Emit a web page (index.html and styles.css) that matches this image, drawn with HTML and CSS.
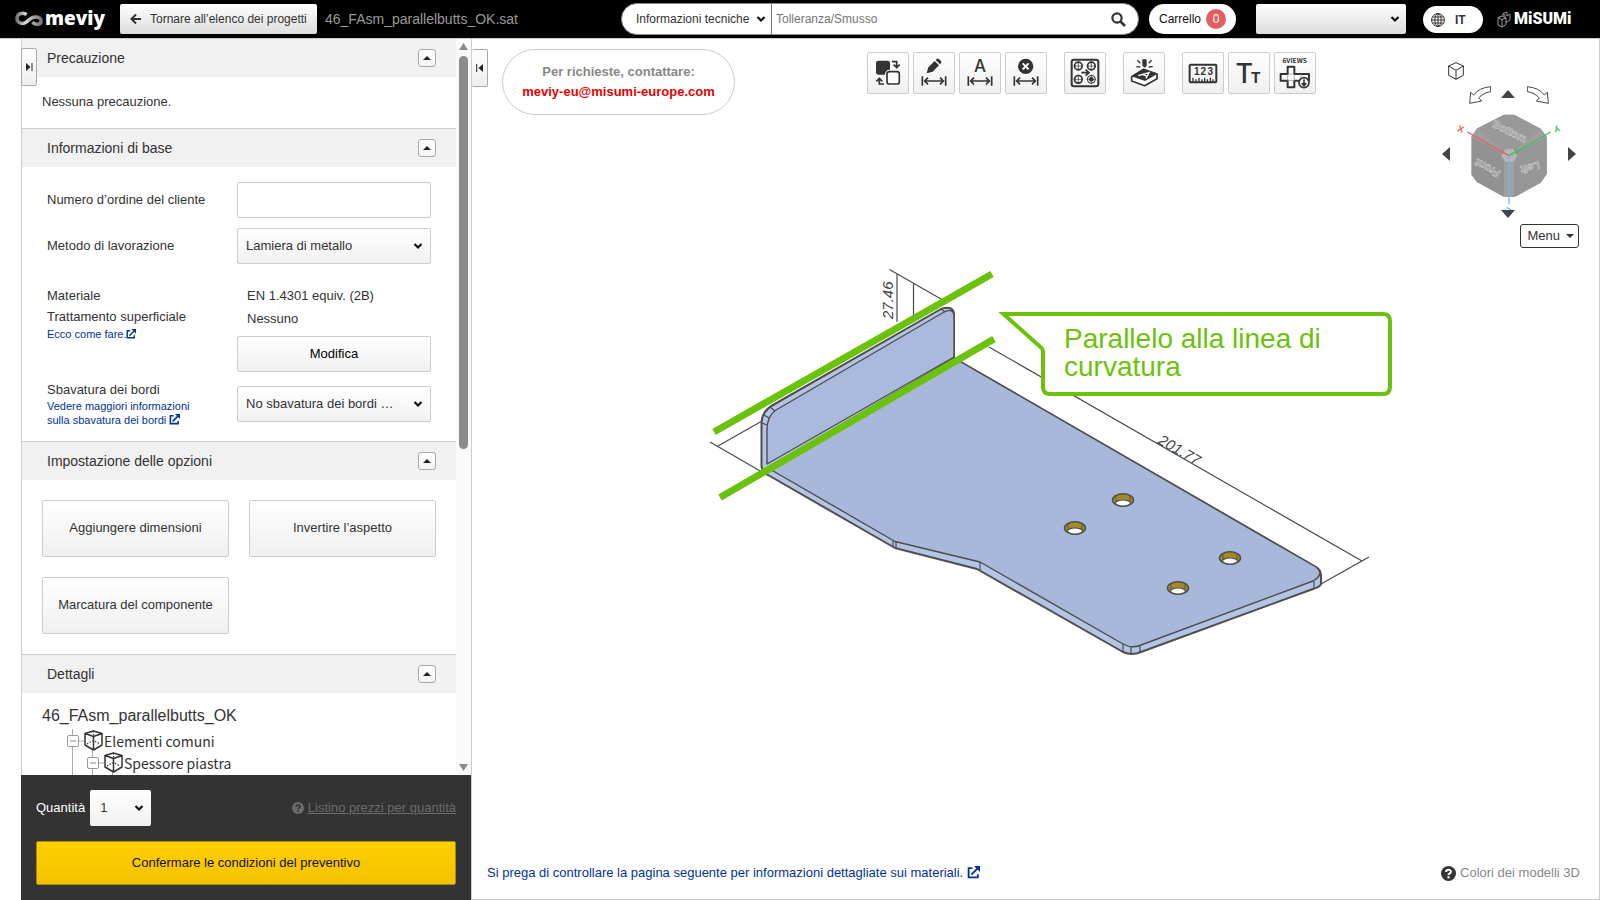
FILE: index.html
```html
<!DOCTYPE html>
<html lang="it">
<head>
<meta charset="utf-8">
<meta name="viewport" content="width=device-width, initial-scale=1">
<title>meviy</title>
<link rel="stylesheet" href="styles.css">
</head>
<body>
<svg class="defs" aria-hidden="true">
  <symbol id="chevron" viewBox="0 0 10 8"><path d="M1.5 2 5 5.5 8.500 2" fill="none" stroke="currentColor" stroke-width="2.200"/></symbol>
  <symbol id="external" viewBox="0 0 12 12"><path d="M5 2H1.500v8.500H10V7.500M4 8 10 2" fill="none" stroke="currentColor" stroke-width="1.700"/><path d="M6.500 0H12v5.500z" fill="currentColor"/></symbol>
  <symbol id="help" viewBox="0 0 14 14"><circle cx="7" cy="7" r="7" fill="currentColor"/><path d="M4.800 5.500C4.800 2.900 9.300 2.900 9.300 5.400 9.300 6.900 7 6.900 7 8.500" fill="none" stroke="var(--mark)" stroke-width="1.900"/><rect x="6" y="9.500" width="2" height="2" fill="var(--mark)"/></symbol>
  <symbol id="node" viewBox="0 0 19 21"><path d="M9.500 1 18 3.500v11.500L9.500 20 1 15V3.500zM1 3.500 9.500 6.500 18 3.500M9.500 6.500V20" fill="none" stroke="#333" stroke-width="1.500" stroke-linejoin="round"/><path d="M9.500 1v10M3 14l6.500-3.500L16 14" fill="none" stroke="#333" stroke-width="1.200" stroke-dasharray="1.500 1.500"/></symbol>
  <symbol id="span" viewBox="0 0 126 126"><path d="M28 73v28M98 73v28M36 87h54M45 77 35 87l10 10M81 77l10 10-10 10" fill="none" stroke="#333" stroke-width="5"/></symbol>
</svg>

<header class="topbar">
  <a class="logo" href="#" aria-label="meviy">
    <svg width="28" height="16" viewBox="0 0 29 16"><defs><linearGradient id="silver"><stop offset="0" stop-color="#77727a"/><stop offset=".35" stop-color="#ddd8dc"/><stop offset=".65" stop-color="#aaa"/><stop offset="1" stop-color="#777"/></linearGradient></defs><path d="M12 3.500C8 .5 2 2.500 2 7.500 2 12.500 8 14 12 11 15 8.500 17 6 21 6c3 0 6 1 6 4 0 4-5 4.500-9 1.500" fill="none" stroke="url(#silver)" stroke-width="3.600"/></svg>
    <span class="logo-name">meviy</span>
  </a>
  <button class="back" type="button"><svg width="11" height="12" viewBox="0 0 11 12"><path d="M11 6H2M6 1.500 1.500 6 6 10.500" fill="none" stroke="#333" stroke-width="2"/></svg>Tornare all’elenco dei progetti</button>
  <span class="filename">46_FAsm_parallelbutts_OK.sat</span>
  <form class="search">
    <span class="pick search-kind"><select aria-label="Categoria"><option>Informazioni tecniche</option></select><svg class="chev" width="10" height="8"><use href="#chevron"/></svg></span>
    <input type="text" placeholder="Tolleranza/Smusso" aria-label="Cerca">
    <button class="search-go" type="button" aria-label="Cerca"><svg width="15" height="15" viewBox="0 0 15 15"><circle cx="6" cy="6" r="4.600" fill="none" stroke="#333" stroke-width="2.200"/><path d="m9 9 5 5" stroke="#333" stroke-width="2.600"/></svg></button>
  </form>
  <button class="cart" type="button">Carrello <span class="badge">0</span></button>
  <span class="pick account"><select aria-label="Account"><option></option></select><svg class="chev" width="10" height="8"><use href="#chevron"/></svg></span>
  <button class="lang" type="button"><svg width="14" height="14" viewBox="0 0 14 14"><g fill="none" stroke="#333"><circle cx="7" cy="7" r="6.400"/><ellipse cx="7" cy="7" rx="3.200" ry="6.400"/><path d="M7 .5v13M.5 7h13M1.500 4h11M1.500 10h11"/></g></svg>IT</button>
  <a class="misumi" href="#" aria-label="MiSUMi"><svg width="15" height="17" viewBox="0 0 15 17"><path d="M1 6.500 5 5l4 2v6.500L5 16l-4-2zM1 6.500l4 2 4-1.500M5 8.500V16M6 5V2.500L10 1v4l3-2v6l-4 2.500M6 2.500 8 4v2" fill="none" stroke="#aaa" stroke-width=".9"/></svg><span>MiSUMi</span></a>
</header>

<main class="workspace">
  <aside class="sidebar">
    <button class="tab tab-inner" type="button" aria-label="Espandi"><svg width="7" height="8" viewBox="0 0 7 8"><path d="M0 0l4.500 4L0 8z" fill="#222"/><path d="M6 0v8" stroke="#222"/></svg></button>
    <div class="scroller">
      <div class="sections">
        <section>
          <div class="head"><h2>Precauzione</h2><button class="fold" type="button" aria-label="Comprimi"></button></div>
          <p class="notice">Nessuna precauzione.</p>
        </section>
        <section>
          <div class="head"><h2>Informazioni di base</h2><button class="fold" type="button" aria-label="Comprimi"></button></div>
          <div class="form">
            <div class="row"><label for="order">Numero d’ordine del cliente</label><input id="order" class="field" type="text"></div>
            <div class="row"><label for="method">Metodo di lavorazione</label><span class="pick field"><select id="method"><option>Lamiera di metallo</option></select><svg class="chev" width="10" height="8"><use href="#chevron"/></svg></span></div>
            <div class="row material">
              <div><p>Materiale</p><p>Trattamento superficiale</p><a href="#">Ecco come fare.<svg width="10" height="10"><use href="#external"/></svg></a></div>
              <div class="values"><p>EN 1.4301 equiv. (2B)</p><p>Nessuno</p><button class="field modify" type="button">Modifica</button></div>
            </div>
            <div class="row deburr">
              <div><label for="edge">Sbavatura dei bordi</label><a href="#">Vedere maggiori informazioni<br>sulla sbavatura dei bordi <svg width="11" height="11"><use href="#external"/></svg></a></div>
              <span class="pick field"><select id="edge"><option>No sbavatura dei bordi …</option></select><svg class="chev" width="10" height="8"><use href="#chevron"/></svg></span>
            </div>
          </div>
        </section>
        <section>
          <div class="head"><h2>Impostazione delle opzioni</h2><button class="fold" type="button" aria-label="Comprimi"></button></div>
          <div class="options">
            <button type="button">Aggiungere dimensioni</button>
            <button type="button">Invertire l’aspetto</button>
            <button type="button">Marcatura del componente</button>
          </div>
        </section>
        <section>
          <div class="head"><h2>Dettagli</h2><button class="fold" type="button" aria-label="Comprimi"></button></div>
          <div class="details">
            <h3>46_FAsm_parallelbutts_OK</h3>
            <ul class="tree">
              <li><svg width="37" height="22" viewBox="0 0 37 22"><path d="M5.500-1v6M5.500 17v8M11 11h6M25.500 20v2" stroke="#aaa" fill="none"/><rect x=".5" y="5.500" width="11" height="11" rx="1.500" fill="#fff" stroke="#999"/><path d="M3 11h6" stroke="#888"/><use href="#node" x="17" width="19" height="21"/></svg>Elementi comuni</li>
              <li><svg width="57" height="22" viewBox="0 0 57 22"><path d="M5.500 0v24M25.500-2v7M25.500 17v8M31 11h6M45.500 20v4" stroke="#aaa" fill="none"/><rect x="20.500" y="5.500" width="11" height="11" rx="1.500" fill="#fff" stroke="#999"/><path d="M23 11h6" stroke="#888"/><use href="#node" x="37" width="19" height="21"/></svg>Spessore piastra</li>
            </ul>
          </div>
        </section>
      </div>
      <div class="scrollbar" aria-hidden="true"><svg width="9" height="7"><path d="M4.500 0 9 7H0z" fill="#8b8b8b"/></svg><div class="track"><div class="thumb"></div></div><svg width="9" height="7"><path d="M0 0h9L4.500 7z" fill="#8b8b8b"/></svg></div>
    </div>
    <footer class="quote">
      <div class="quantity">
        <label for="qty">Quantità</label>
        <span class="pick qty"><select id="qty"><option>1</option></select><svg class="chev" width="10" height="8"><use href="#chevron"/></svg></span>
        <a class="prices" href="#"><svg width="12" height="12"><use href="#help"/></svg><span>Listino prezzi per quantità</span></a>
      </div>
      <button class="confirm" type="button">Confermare le condizioni del preventivo</button>
    </footer>
  </aside>

  <section class="viewer">
    <svg class="model" viewBox="472 39 1127 860">
      <g fill="none" stroke="#4a4a4a" stroke-width="1.200">
        <path d="M889.500 269.500 948 303M897 274v48M913.500 284v31M710 442l52 30M718 446l44-25M989 347l373 214M1321 584l48-27"/>
      </g>
      <g stroke="#4e4e4e" stroke-width="2" stroke-linejoin="round">
        <path fill="#b3c4e4" d="M761.500 465V423Q762 411 773 405L941 309Q954 305 954 315V358L1316 567Q1321 570 1321 575V584Q1320 587 1313 589L1141 652Q1132 656 1123 652L977 569 895 548 768 475Q761.500 472 761.500 465Z"/>
        <path fill="#a7b8da" stroke-width="1.400" d="M768 468 954 358 1316 567Q1325 574 1313 581L1141 645Q1132 649 1123 644L980 562 895 541.500Z"/>
        <path fill="#a9badd" stroke-width="1.400" d="M767 464V430Q767 416 776 410L944 312Q954 307 954 317V357Z"/>
        <path fill="none" stroke-width="1.200" d="M762 423l5 2M764 415l5 3M770 407l5 4M941 309l4 3M893 541v6M896 542v6M1123 644v8M1131 647v7M1140 645v7M1314 581v8M980 562v8"/>
      </g>
      <g id="holes">
        <g id="hole" transform="translate(1123 500)"><ellipse rx="10.500" ry="6.200" fill="#a28b25" stroke="#50504c" stroke-width="1.500"/><path d="M-7-4v6M7-4v6" stroke="#555" fill="none"/><ellipse cy="3" rx="7.500" ry="3" fill="#fff" stroke="#50504c" stroke-width="1.200"/></g>
        <use href="#hole" x="-48" y="28"/><use href="#hole" x="107" y="58"/><use href="#hole" x="55" y="88"/>
      </g>
      <path d="M714 432 992 274M720 497.500 994 339" stroke="#6cc20a" stroke-width="7"/>
      <path d="M1003.500 314H1383Q1390 314 1390 321V387Q1390 394 1383 394H1050Q1043 394 1043 387V351Q1043 349 1041 347.500Z" fill="#fff" stroke="#6cc20a" stroke-width="4"/>
      <text class="dim" transform="translate(893 319) rotate(-90)">27.46</text>
      <text class="dim" transform="translate(1157 443) rotate(30)">201.77</text>
      <text class="callout"><tspan x="1064" y="348">Parallelo alla linea di</tspan><tspan x="1064" y="376">curvatura</tspan></text>
    </svg>

    <button class="tab tab-outer" type="button" aria-label="Comprimi pannello"><svg width="7" height="8" viewBox="0 0 7 8"><path d="M7 0 2.500 4 7 8z" fill="#222"/><path d="M.7 0v8" stroke="#222"/></svg></button>

    <div class="viewer-top">
      <div class="contact"><span>Per richieste, contattare:</span><a href="#">meviy-eu@misumi-europe.com</a></div>
      <div class="tools">
        <div class="group">
          <button type="button" aria-label="Scambia"><svg viewBox="0 0 126 126"><rect x="27" y="26" width="42" height="42" rx="7" fill="#333"/><rect x="60" y="59" width="37" height="37" rx="7" fill="#fff" stroke="#fff" stroke-width="12"/><rect x="60" y="59" width="37" height="37" rx="7" fill="#fff" stroke="#333" stroke-width="5"/><path d="M75 29h14v16M80 38l9 9 9-9M51 96H37V81M28 88l9-9 9 9" fill="none" stroke="#333" stroke-width="5"/></svg></button>
          <button type="button" aria-label="Modifica quota"><svg viewBox="0 0 126 126"><use href="#span"/><path d="m41 64 5-18 19-19 13 13-19 19z" fill="#333"/><path d="m68 24 4-4q3-2 6 1l6 6q3 3 0 6l-3 4z" fill="#333"/></svg></button>
          <button type="button" aria-label="Quota automatica"><svg viewBox="0 0 126 126"><use href="#span"/><text class="icon-a" x="63" y="60">A</text></svg></button>
          <button type="button" aria-label="Elimina quota"><svg viewBox="0 0 126 126"><use href="#span"/><circle cx="62" cy="43" r="23" fill="#333"/><path d="m53 34 18 18M71 34 53 52" stroke="#fff" stroke-width="6"/></svg></button>
        </div>
        <button type="button" aria-label="Fori"><svg viewBox="0 0 126 126"><g fill="none" stroke="#333"><rect x="23" y="23" width="80" height="80" rx="7" stroke-width="6"/><g stroke-width="5"><circle cx="43" cy="42" r="11.500"/><circle cx="82" cy="42" r="11.500"/><circle cx="43" cy="82" r="11.500"/><circle cx="82" cy="82" r="12" stroke-width="3"/></g><path stroke-width="2" d="M43 28v28M29 42h28M82 28v28M68 42h28M43 68v28M29 82h28M82 68v28M68 82h28"/><path d="M52 62h20M65 53l10 9-10 9" stroke-width="5"/></g><circle cx="82" cy="82" r="7" fill="#333"/></svg></button>
        <button type="button" aria-label="Marcatura"><svg viewBox="0 0 126 126"><path d="M26 74 61 52 102 66V80L65 101 26 87Z" fill="#fff" stroke="#333" stroke-width="5" stroke-linejoin="round"/><path d="M25 73 61 50 104 65 66 87Z" fill="#333"/><path d="M46 71l32-9-9 17M59 67l14 6" fill="none" stroke="#fff" stroke-width="4"/><path d="M58 22h13v19l-6 6-7-6z" fill="#333"/><path d="m43 25 9 9M86 25l-9 9M40 44l12 1M89 44l-12 1" stroke="#333" stroke-width="4"/></svg></button>
        <div class="group">
          <button type="button" aria-label="Misura"><svg viewBox="0 0 126 126"><rect x="23" y="38" width="80" height="53" rx="3" fill="none" stroke="#333" stroke-width="6"/><text class="icon-num" x="44" y="69">1</text><text class="icon-num" x="64" y="69">2</text><text class="icon-num" x="85" y="69">3</text><path d="M33 77v14M42 82v9M51 77v14M60 82v9M68 77v14M76 82v9M85 77v14M93 82v9" stroke="#333" stroke-width="4"/></svg></button>
          <button type="button" aria-label="Testo"><svg viewBox="0 0 126 126"><text class="icon-t" x="49" y="92">T</text><text class="icon-t icon-t-small" x="83" y="92">T</text></svg></button>
          <button type="button" aria-label="Sei viste"><svg viewBox="0 0 126 126"><text class="icon-views" x="62" y="33">6VIEWS</text><path d="M41 44H61V66H105V86H61V106H41V86H20V66H41Z" fill="#fff" stroke="#333" stroke-width="6" stroke-linejoin="round"/><path d="M41 66h20M41 86h20M41 66v20M61 66v20M81 66v20" stroke="#888" stroke-width="2"/><circle cx="90" cy="92" r="15" fill="#fff" stroke="#333" stroke-width="5"/><path d="M90 82v16M83 93l7 8 7-8" fill="none" stroke="#333" stroke-width="5"/></svg></button>
        </div>
      </div>
    </div>

    <div class="navigator">
      <svg class="nav-cube" viewBox="0 0 540 630">
        <path d="M252 194h30L362 236 380 260V372L362 398 284 441H252L170 396 154 374V262L170 236Z" fill="#929292"/>
        <path d="M252 194h30L362 236 282 296 267 302 245 296 170 236Z" fill="#999"/>
        <path d="M267 302 290 312 374 255 380 260V372L362 398 284 441H267Z" fill="#969696"/>
        <path d="M154 262 170 236 245 296V306ZM380 260 362 236 288 296V306ZM252 340h30V441H252Z" fill="#a2a2a2" opacity=".8"/>
        <path d="M256 297h24l12 20-12 20h-24l-12-20Z" fill="#b5b5b5"/>
        <text class="face" transform="translate(264 254) rotate(27)">Bottom</text>
        <text class="face" transform="translate(208 345) rotate(208)">Front</text>
        <text class="face" transform="translate(328 342) rotate(165)">Left</text>
        <g stroke-width="4"><path d="M267 317 142 246" stroke="#f35b5b"/><path d="m267 317 125-71" stroke="#3dbf66"/><path d="M267 317V462" stroke="#76b5f5"/></g>
        <text class="axis axis-x" transform="translate(119 246) rotate(20)">X</text><text class="axis axis-y" transform="translate(408 227) rotate(165)">Y</text><path d="m260 472 14 8" stroke="#76b5f5" stroke-width="4"/>
      </svg>
      <button class="nav-home" type="button" aria-label="Vista isometrica"><svg viewBox="0 0 48 54"><path d="M24 2 46 12V40L24 52 2 40V12ZM2 12 24 25 46 12M24 25V52" fill="none" stroke="#333" stroke-width="3"/></svg></button>
      <button class="nav-ccw" type="button" aria-label="Ruota a sinistra"><svg viewBox="0 0 66 54"><path d="M65 2V17Q43 20 29 36L38 45 2 52 5 19 14 27Q30 5 65 2Z" fill="none" stroke="#444" stroke-width="3"/></svg></button>
      <button class="nav-cw" type="button" aria-label="Ruota a destra"><svg viewBox="0 0 66 54"><path d="M1 2V17Q23 20 37 36L28 45 64 52 61 19 52 27Q36 5 1 2Z" fill="none" stroke="#444" stroke-width="3"/></svg></button>
      <button class="nav-up" type="button" aria-label="Su"><svg viewBox="0 0 14 8"><path d="M7 0l7 8H0z" fill="#444"/></svg></button>
      <button class="nav-left" type="button" aria-label="Sinistra"><svg viewBox="0 0 8 14"><path d="M8 0v14L0 7z" fill="#444"/></svg></button>
      <button class="nav-right" type="button" aria-label="Destra"><svg viewBox="0 0 8 14"><path d="M0 0v14l8-7z" fill="#444"/></svg></button>
      <button class="nav-down" type="button" aria-label="Giù"><svg viewBox="0 0 14 8"><path d="M0 0h14L7 8z" fill="#444"/></svg></button>
      <button class="menu" type="button">Menu</button>
    </div>

    <div class="viewer-bottom">
      <a class="info" href="#">Si prega di controllare la pagina seguente per informazioni dettagliate sui materiali. <svg width="13" height="13"><use href="#external"/></svg></a>
      <a class="colors" href="#"><svg width="15" height="15"><use href="#help"/></svg>Colori dei modelli 3D</a>
    </div>
  </section>
</main>
</body>
</html>
```
FILE: styles.css
```css
* { box-sizing: border-box; }

body {
  margin: 0;
  height: 100vh;
  display: flex;
  flex-direction: column;
  overflow: hidden;
  font-family: "Liberation Sans", Arial, sans-serif;
  font-size: 13px;
  line-height: 20px;
  color: #333;
  background: #fff;
}

h2, h3, p, ul { margin: 0; padding: 0; font-weight: normal; }
ul { list-style: none; }
a { color: #003399; text-decoration: none; }
button, input, select { font: inherit; color: inherit; margin: 0; }
button { padding: 0; cursor: pointer; }
.defs { position: absolute; width: 0; height: 0; }

.pick { position: relative; display: flex; }
.pick select {
  appearance: none;
  flex: 1;
  min-width: 0;
  border: 0;
  padding: 0 24px 0 8px;
  background: transparent;
  outline: 0;
}
.chev { position: absolute; right: 7px; top: 50%; margin-top: -4px; pointer-events: none; color: #111; }

/* Top bar */
.topbar {
  flex: none;
  height: 38px;
  display: flex;
  align-items: center;
  padding: 0 28px 0 15px;
  background: #000;
  font-size: 12px;
}
.logo { display: flex; align-items: center; width: 105px; color: #fff; }
.logo-name { font: 800 19px/24px "Open Sans", sans-serif; margin: 0 0 2px 2px; }
.back {
  display: flex;
  align-items: center;
  gap: 9px;
  width: 197px;
  height: 30px;
  padding: 0 10px;
  border: 0;
  border-radius: 2px;
  background: linear-gradient(#fff, #ddd);
  white-space: nowrap;
}
.back svg { flex: none; }
.filename { margin-left: 8px; font-size: 14px; color: #999; }
.search {
  display: flex;
  width: 518px;
  height: 32px;
  margin-left: auto;
  border: 1px solid #888;
  border-radius: 16px;
  background: #fff;
  overflow: hidden;
}
.search-kind { width: 150px; border-right: 1px solid #777; }
.pick.search-kind select { padding: 0 16px 0 14px; }
.search-kind .chev { right: 5px; }
.search input { flex: 1; min-width: 0; border: 0; padding: 0 4px; outline: 0; }
.search input::placeholder { color: #757575; }
.search-go { width: 40px; border: 0; background: none; line-height: 0; }
.cart {
  display: flex;
  align-items: center;
  justify-content: space-between;
  width: 87px;
  height: 30px;
  margin-left: 10px;
  padding: 0 10px;
  border: 0;
  border-radius: 15px;
  background: #fff;
  color: #111;
}
.badge { width: 20px; height: 20px; border-radius: 50%; background: #e06060; color: #fff; text-align: center; }
.account { width: 150px; height: 30px; margin-left: 20px; border-radius: 2px; background: linear-gradient(#fff, #ddd); }
.account .chev { right: 6px; }
.lang {
  display: flex;
  align-items: center;
  gap: 10px;
  width: 60px;
  height: 27px;
  margin-left: 17px;
  padding: 2px 8px 0;
  border: 0;
  border-radius: 14px;
  background: #fff;
  font-weight: bold;
}
.misumi { display: flex; align-items: center; gap: 2px; width: 75px; margin-left: 14px; color: #fff; font: 900 16px/20px Roboto, sans-serif; }

/* Main area */
.workspace { flex: 1; min-height: 0; display: flex; padding-left: 21px; border-top: 1px solid #ccc; }
.sidebar { position: relative; flex: none; width: 450px; display: flex; flex-direction: column; }
.scroller { flex: 1; min-height: 0; display: flex; border-left: 1px solid #ccc; }
.sections { flex: 1; min-width: 0; overflow: hidden; }
.sections section + section { border-top: 1px solid #ccc; }

.tab {
  position: absolute;
  width: 16px;
  height: 38px;
  border: 1px solid #aaa;
  border-radius: 2px;
  background: linear-gradient(#fff, #eee);
  line-height: 0;
}
.tab-inner { left: 0; top: 9px; }
.tab-outer { left: 0; top: 10px; border-left: 0; }

.head {
  display: flex;
  align-items: center;
  justify-content: space-between;
  height: 38px;
  padding: 0 20px 0 25px;
  background: #f1f1f1;
}
.head h2 { font-size: 14px; }
.fold {
  width: 18px;
  height: 18px;
  display: grid;
  place-items: center;
  border: 1px solid #aaa;
  border-radius: 3px;
  background: linear-gradient(#fff, #f4f4f4);
}
.fold::before { content: ""; border: 4px solid transparent; border-top: 0; border-bottom-color: #222; }
.notice { padding: 15px 20px 16px; }

.form { padding: 15px 25px 14px; }
.row { display: grid; grid-template-columns: 1fr 194px; align-items: center; margin-bottom: 10px; }
.field {
  width: 100%;
  height: 36px;
  border: 1px solid #ccc;
  border-radius: 2px;
  background: linear-gradient(#fff, #f1f1f1);
}
input.field { background: #fff; padding: 0 8px; }
.material { margin: 22px 0 9px; align-items: start; }
.material p + p { margin-top: 1px; }
.material a, .deburr a { display: block; font-size: 11px; line-height: 14px; }
.material .values p { padding-left: 10px; }
.material .values p + p { margin-top: 3px; }
.modify { margin-top: 7px; color: #000; }
.deburr { margin: 0; }
.deburr label { display: block; line-height: 18px; }
.material a svg, .deburr a svg { vertical-align: -1px; }

.options { display: grid; grid-template-columns: 1fr 1fr; gap: 20px; padding: 20px; }
.options button {
  height: 57px;
  padding-bottom: 2px;
  border: 1px solid #ccc;
  border-radius: 2px;
  background: linear-gradient(#fff, #f0f0f0);
}

.details { padding: 12px 20px; }
.details h3 { font-size: 16px; line-height: 22px; }
.tree { margin: 3px 0 0 25px; font: 14px/22px "Noto Sans CJK JP", sans-serif; }
.tree li { display: flex; height: 22px; }
.tree svg { flex: none; overflow: visible; }

.scrollbar {
  width: 15px;
  display: flex;
  flex-direction: column;
  align-items: center;
  gap: 6px;
  padding: 4px 0;
  background: #fafafa;
}
.track { flex: 1; width: 9px; }
.thumb { height: 56%; border-radius: 5px; background: #8b8b8b; }

.quote { flex: none; padding: 15px; background: #333; color: #fff; }
.quantity { display: flex; align-items: center; margin-bottom: 15px; }
.qty { width: 61px; height: 36px; margin-left: 5px; border-radius: 2px; background: linear-gradient(#fff, #f1f1f1); color: #333; }
.pick.qty select { padding-left: 10px; }
.prices { --mark: #333; display: flex; align-items: center; gap: 4px; margin-left: auto; color: #6b6b6b; }
.prices span { text-decoration: underline; }
.confirm {
  width: 100%;
  height: 44px;
  border: 1px solid #a88a10;
  border-radius: 2px;
  background: linear-gradient(#ffcf00, #f3c200);
  color: #111;
}

/* Viewer */
.viewer {
  position: relative;
  flex: 1;
  min-width: 0;
  display: flex;
  flex-direction: column;
  justify-content: space-between;
  border: 1px solid #ccc;
  border-top: 0;
}
.model { position: absolute; inset: 0; width: 100%; height: 100%; }
.dim { font-size: 15px; font-style: italic; fill: #444; }
.callout { font-size: 28px; fill: #6cc20a; }

.viewer-top { position: relative; display: flex; align-items: flex-start; padding: 10px 283px 0 30px; }
.contact {
  width: 233px;
  padding: 12px 0;
  border: 1px solid #ccc;
  border-radius: 33px;
  text-align: center;
  font-weight: bold;
  color: #888;
}
.contact span, .contact a { display: block; }
.contact a { color: #e60000; }
.tools { display: flex; gap: 17px; margin: 3px 0 0 auto; }
.group { display: flex; gap: 4px; }
.tools button {
  width: 42px;
  height: 42px;
  border: 1px solid #ccc;
  border-radius: 2px;
  background: linear-gradient(#fff, #f0f0f0);
  line-height: 0;
}
.tools button svg { width: 42px; height: 42px; margin: -1px; }
.tools text { fill: #333; text-anchor: middle; }
.icon-a { font: 500 51px Inter, sans-serif; }
.icon-num { font: bold 30px "Liberation Sans", sans-serif; }
.icon-t { font: 500 81px Inter, sans-serif; }
.icon-t-small { font-size: 45px; font-weight: 700; }
.icon-views { font: 700 20px "Noto Sans CJK JP", sans-serif; }

.navigator { position: absolute; top: 11px; right: 0; width: 179px; height: 210px; }
.nav-cube { width: 180px; height: 210px; }
.face { font: bold 32px "Liberation Sans", sans-serif; fill: #888; stroke: #ccc; stroke-width: 2px; text-anchor: middle; }
.axis { font: bold 28px "Liberation Sans", sans-serif; text-anchor: middle; }
.axis-x { fill: #f35b5b; }
.axis-y { fill: #3dbf66; }
.navigator button { position: absolute; border: 0; background: none; line-height: 0; }
.navigator button svg { width: 100%; height: 100%; }
.nav-home { left: 28px; top: 12px; width: 16px; height: 18px; }
.nav-ccw { left: 49px; top: 36px; width: 22px; height: 18px; }
.nav-cw { left: 107px; top: 36px; width: 22px; height: 18px; }
.nav-up { left: 81px; top: 40px; width: 14px; height: 8px; }
.nav-left { left: 22px; top: 97px; width: 8px; height: 14px; }
.nav-right { left: 148px; top: 97px; width: 8px; height: 14px; }
.nav-down { left: 81px; top: 160px; width: 14px; height: 8px; }
.navigator .menu {
  right: 20px;
  bottom: 12px;
  display: flex;
  align-items: center;
  gap: 6px;
  height: 24px;
  padding: 0 4px 0 6px;
  border: 1px solid #333;
  border-radius: 3px;
  background: #fff;
  line-height: 20px;
}
.menu::after { content: ""; border: 4px solid transparent; border-bottom: 0; border-top-color: #333; }

.viewer-bottom { position: relative; display: flex; justify-content: space-between; padding: 0 19px 16px 15px; }
.info svg { vertical-align: -2px; }
.colors { --mark: #fff; display: flex; align-items: center; gap: 4px; color: #888; }
.colors svg { color: #333; }
```
